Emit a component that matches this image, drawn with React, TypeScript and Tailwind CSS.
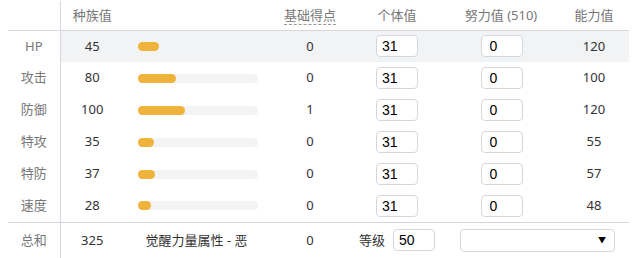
const stats = [
  { label: 'HP', base: 45, ev: 0, iv: 31, effort: 0, value: 120 },
  { label: '攻击', base: 80, ev: 0, iv: 31, effort: 0, value: 100 },
  { label: '防御', base: 100, ev: 1, iv: 31, effort: 0, value: 120 },
  { label: '特攻', base: 35, ev: 0, iv: 31, effort: 0, value: 55 },
  { label: '特防', base: 37, ev: 0, iv: 31, effort: 0, value: 57 },
  { label: '速度', base: 28, ev: 0, iv: 31, effort: 0, value: 48 },
];

function NumBox({ value, padLeft = 'pl-[5px]' }: { value: number; padLeft?: string }) {
  return (
    <div className="h-[22px] w-[42px] rounded-[4px] border border-[#d4d8de] bg-white">
      <input
        className={`h-full w-full border-0 bg-transparent ${padLeft} text-[14px] text-black outline-none font-['Liberation_Sans',sans-serif]`}
        defaultValue={value}
      />
    </div>
  );
}

export default function App() {
  return (
    <div className="h-[258px] w-[644px] bg-white pl-2 pt-[1px] text-[13px] text-[#333] font-['Noto_Sans','Noto_Sans_CJK_SC',sans-serif]">
      <table className="w-[621px] table-fixed border-collapse">
        <colgroup>
          <col className="w-[52px]" />
          <col className="w-[64px]" />
          <col className="w-[145px]" />
          <col className="w-[82px]" />
          <col className="w-[92px]" />
          <col className="w-[116px]" />
          <col className="w-[70px]" />
        </colgroup>
        <thead>
          <tr className="h-[29px] border-b border-[#d3d7de] text-[#777]">
            <th className="border-r border-[#d3d7de] p-0 font-normal" />
            <th className="p-0 font-normal">种族值</th>
            <th className="p-0 font-normal" />
            <th className="p-0 font-normal">
              <span className="border-b border-dashed border-[#999]">基础得点</span>
            </th>
            <th className="p-0 font-normal">个体值</th>
            <th className="p-0 font-normal">努力值 (510)</th>
            <th className="p-0 font-normal">能力值</th>
          </tr>
        </thead>
        <tbody>
          {stats.map((s, i) => (
            <tr key={s.label} className="h-[32px]">
              <td className="border-r border-[#d3d7de] p-0 text-center text-[#777]">{s.label}</td>
              <td className={`p-0 text-center ${i === 0 ? 'bg-[#f2f3f5]' : ''}`}>{s.base}</td>
              <td className={`p-0 pl-[14px] ${i === 0 ? 'bg-[#f2f3f5]' : ''}`}>
                <div className={`h-[9px] w-[120px] rounded-full ${i === 0 ? '' : 'bg-[#f3f3f3]'}`}>
                  <div
                    className="h-full rounded-full bg-[#efb33c]"
                    style={{ width: Math.round((s.base / 255) * 120) }}
                  />
                </div>
              </td>
              <td className={`p-0 text-center ${i === 0 ? 'bg-[#f2f3f5]' : ''}`}>{s.ev}</td>
              <td className={`p-0 ${i === 0 ? 'bg-[#f2f3f5]' : ''}`}>
                <div className="flex justify-center">
                  <NumBox value={s.iv} />
                </div>
              </td>
              <td className={`p-0 ${i === 0 ? 'bg-[#f2f3f5]' : ''}`}>
                <div className="flex justify-center pl-[1px]">
                  <NumBox value={s.effort} padLeft="pl-[8px]" />
                </div>
              </td>
              <td className={`p-0 text-center ${i === 0 ? 'bg-[#f2f3f5]' : ''}`}>{s.value}</td>
            </tr>
          ))}
          <tr className="h-[36px] border-t border-[#d3d7de]">
            <td className="border-r border-[#d3d7de] p-0 text-center text-[#777]">总和</td>
            <td className="p-0 text-center">325</td>
            <td className="p-0 text-center">觉醒力量属性 - 恶</td>
            <td className="p-0 text-center">0</td>
            <td className="p-0">
              <div className="flex items-center justify-center gap-[8px]">
                <span>等级</span>
                <NumBox value={50} />
              </div>
            </td>
            <td colSpan={2} className="p-0">
              <div className="relative ml-[17px] h-[23px] w-[155px] rounded-[4px] border border-[#d4d8de] bg-white">
                <select className="block h-full w-full appearance-none border-0 bg-transparent outline-none" />
                <span className="pointer-events-none absolute right-[8px] top-[6px] text-[8px] leading-none text-black">▼</span>
              </div>
            </td>
          </tr>
        </tbody>
      </table>
    </div>
  );
}
